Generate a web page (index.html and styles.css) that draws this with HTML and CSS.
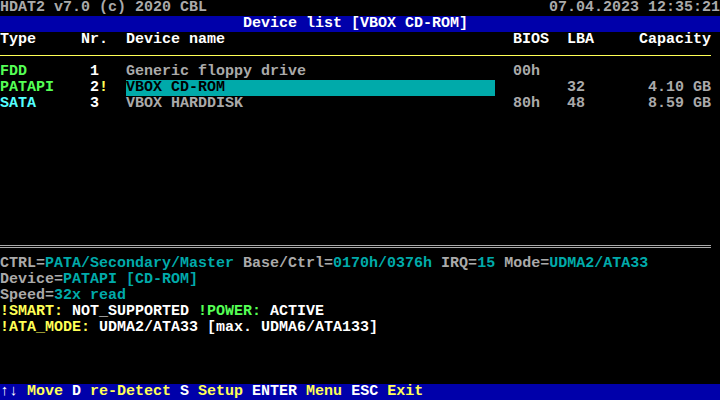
FILE: index.html
```html
<!DOCTYPE html>
<html>
<head>
<meta charset="utf-8">
<link rel="stylesheet" href="styles.css">
</head>
<body>
<div class="screen">
  <div class="row title">
    <span>HDAT2 v7.0 (c) 2020 CBL</span>
    <span>07.04.2023 12:35:21</span>
  </div>
  <div class="row bar">Device list [VBOX CD-ROM]</div>
  <div class="table">
    <div class="tr head">
      <span>Type</span><span>Nr.</span><span>Device name</span><span>BIOS</span><span>LBA</span><span class="r">Capacity</span>
    </div>
    <div class="row rule single"><div class="line"></div></div>
    <div class="tr">
      <span class="lgreen">FDD</span><span class="white"> 1</span><span>Generic floppy drive</span><span>00h</span><span></span><span class="r"></span>
    </div>
    <div class="tr">
      <span class="lgreen">PATAPI</span><span class="white"> 2<span class="yellow">!</span></span><span><span class="sel">VBOX CD-ROM</span></span><span></span><span>32</span><span class="r">4.10 GB</span>
    </div>
    <div class="tr">
      <span class="lcyan">SATA</span><span class="white"> 3</span><span>VBOX HARDDISK</span><span>80h</span><span>48</span><span class="r">8.59 GB</span>
    </div>
  </div>
  <div class="fill"></div>
  <div class="row rule double"><div class="line"></div><div class="line"></div></div>
  <div class="info">
    <div class="row">CTRL=<span class="cyan">PATA/Secondary/Master</span> Base/Ctrl=<span class="cyan">0170h/0376h</span> IRQ=<span class="cyan">15</span> Mode=<span class="cyan">UDMA2/ATA33</span></div>
    <div class="row">Device=<span class="cyan">PATAPI [CD-ROM]</span></div>
    <div class="row">Speed=<span class="cyan">32x read</span></div>
    <div class="row"><span class="yellow">!SMART:</span><span class="white"> NOT_SUPPORTED </span><span class="lgreen">!POWER:</span><span class="white"> ACTIVE</span></div>
    <div class="row"><span class="yellow">!ATA_MODE:</span><span class="white"> UDMA2/ATA33 [max. UDMA6/ATA133]</span></div>
  </div>
  <div class="gap"></div>
  <div class="row status"><span class="white">↑↓</span><span class="yellow"> Move</span><span class="white"> D</span><span class="yellow"> re-Detect</span><span class="white"> S</span><span class="yellow"> Setup</span><span class="white"> ENTER</span><span class="yellow"> Menu</span><span class="white"> ESC</span><span class="yellow"> Exit</span></div>
</div>
</body>
</html>
```
FILE: styles.css
```css
html, body {
  margin: 0;
  padding: 0;
  background: #000;
}
.screen {
  width: 720px;
  height: 400px;
  display: flex;
  flex-direction: column;
  background: #000;
  color: #aaaaaa;
  font-family: "Liberation Mono", "DejaVu Sans Mono", monospace;
  font-size: 15px;
  font-weight: bold;
  line-height: 16px;
  white-space: pre;
  overflow: hidden;
}
.row {
  height: 16px;
  flex: none;
}
.title {
  display: flex;
  justify-content: space-between;
}
.bar {
  background: #0000aa;
  color: #ffffff;
  display: flex;
  justify-content: center;
  padding-right: 9px;
}
.table {
  display: flex;
  flex-direction: column;
  flex: none;
}
.tr {
  height: 16px;
  display: grid;
  grid-template-columns: 81px 45px 387px 54px 72px 72px;
}
.tr .r { text-align: right; }
.head { color: #ffffff; }
.rule {
  display: flex;
  flex-direction: column;
  gap: 1px;
}
.line {
  width: 711px;
  height: 1px;
  flex: none;
}
.single { padding-top: 7px; box-sizing: border-box; }
.single .line { background: #ffff55; }
.double { padding-top: 5px; box-sizing: border-box; }
.double .line { background: #aaaaaa; }
.fill { flex: 1; }
.info {
  display: flex;
  flex-direction: column;
  flex: none;
}
.gap { height: 48px; flex: none; }
.status {
  background: #0000aa;
}
.sel {
  display: inline-block;
  width: 369px;
  height: 16px;
  background: #00aaaa;
  color: #000000;
}
.white { color: #ffffff; }
.yellow { color: #ffff55; }
.lgreen { color: #55ff55; }
.lcyan { color: #55ffff; }
.cyan { color: #00aaaa; }
```
